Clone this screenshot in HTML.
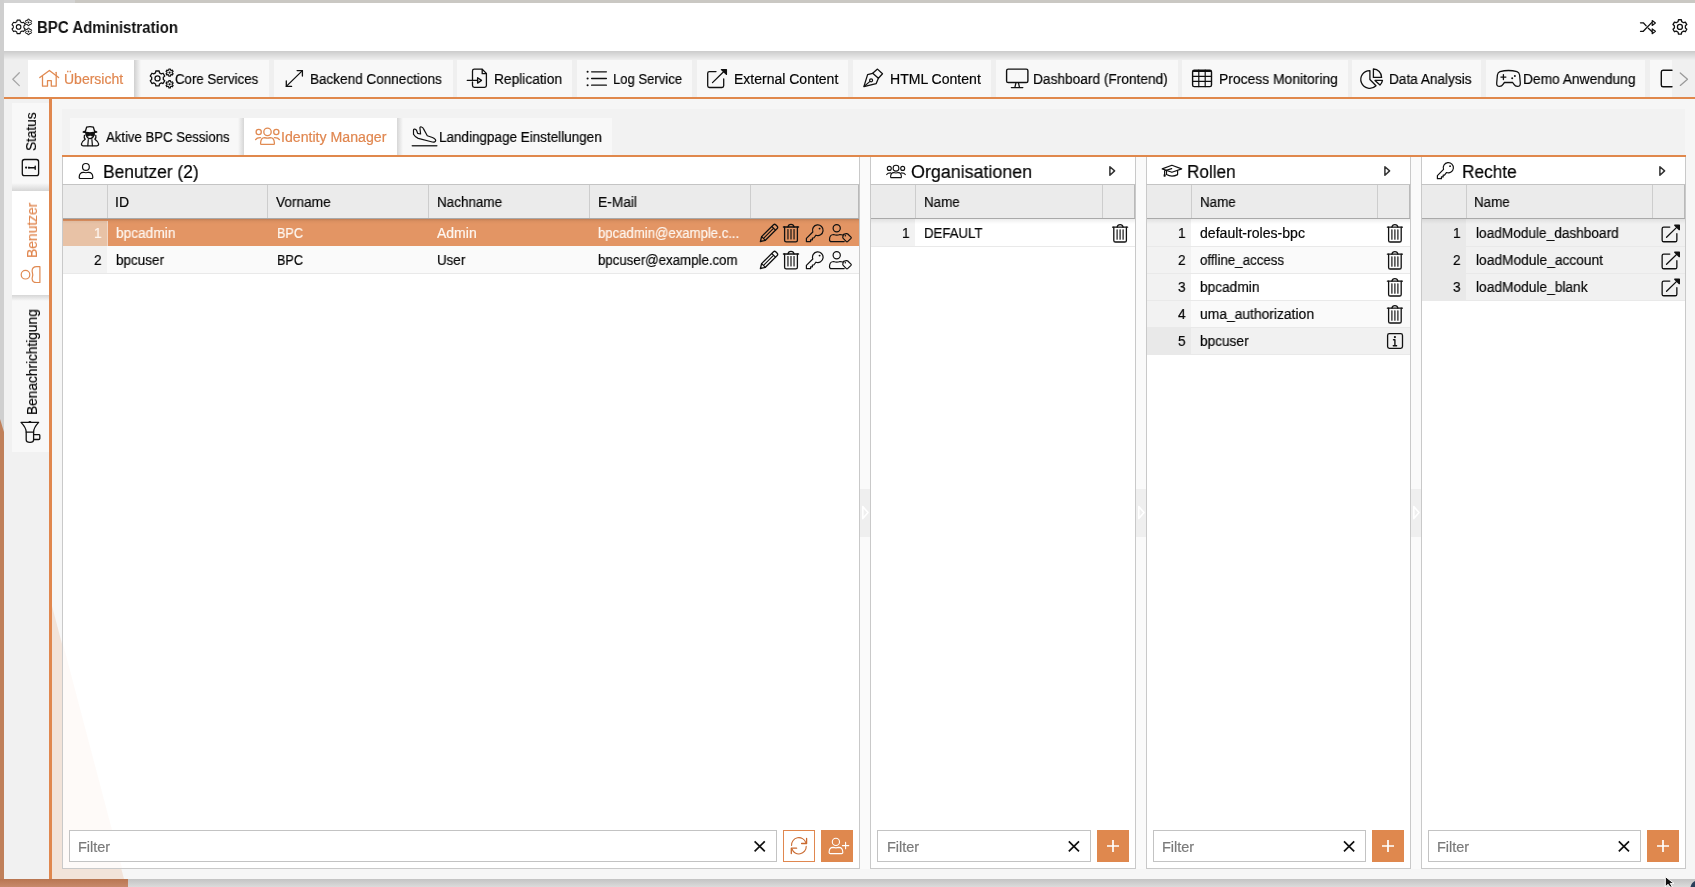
<!DOCTYPE html>
<html><head><meta charset="utf-8"><title>BPC Administration</title>
<style>
html,body{margin:0;padding:0;}
body{width:1695px;height:887px;position:relative;overflow:hidden;background:#d1d1d1;font-family:'Liberation Sans', sans-serif;}
.b{position:absolute;}
.t{position:absolute;white-space:nowrap;transform-origin:0 0;will-change:transform;-webkit-text-stroke:0.2px currentColor;}
.v{position:absolute;white-space:nowrap;transform-origin:0 0;}
svg.ic{position:absolute;left:0;top:0;}
</style></head><body>
<div class="b" style="left:75px;top:0px;width:1620px;height:3px;background:#cac8c3;"></div>
<div class="b" style="left:0px;top:0px;width:75px;height:3px;background:#d3d3d3;"></div>
<div class="b" style="left:0px;top:0px;width:4px;height:887px;background:#cfcfcf;"></div>
<div class="b" style="left:0px;top:419px;width:4px;height:468px;background:#c0805a;clip-path:polygon(0 0,100% 13px,100% 100%,0 100%)"></div>
<div class="b" style="left:0px;top:879px;width:1695px;height:8px;background:linear-gradient(#c3c3c3,#dbdbdb);"></div>
<div class="b" style="left:0px;top:879px;width:128px;height:8px;background:linear-gradient(#b87651,#c7896a);"></div>
<div class="b" style="left:4px;top:3px;width:1691px;height:48px;background:#fff;"></div>
<div class="b" style="left:4px;top:51px;width:1691px;height:46px;background:#efefef;"></div>
<div class="b" style="left:4px;top:51px;width:1691px;height:9px;background:linear-gradient(#cbcbcb,#efefef);"></div>
<div class="b" style="left:28px;top:60px;width:106px;height:37px;background:#fff;"></div>
<div class="b" style="left:134px;top:60px;width:135px;height:37px;background:#f8f8f8;"></div>
<div class="b" style="left:274px;top:60px;width:179px;height:37px;background:#f8f8f8;"></div>
<div class="b" style="left:457px;top:60px;width:115px;height:37px;background:#f8f8f8;"></div>
<div class="b" style="left:577px;top:60px;width:115px;height:37px;background:#f8f8f8;"></div>
<div class="b" style="left:697px;top:60px;width:151px;height:37px;background:#f8f8f8;"></div>
<div class="b" style="left:853px;top:60px;width:138px;height:37px;background:#f8f8f8;"></div>
<div class="b" style="left:996px;top:60px;width:182px;height:37px;background:#f8f8f8;"></div>
<div class="b" style="left:1182px;top:60px;width:166px;height:37px;background:#f8f8f8;"></div>
<div class="b" style="left:1352px;top:60px;width:129px;height:37px;background:#f8f8f8;"></div>
<div class="b" style="left:1486px;top:60px;width:159px;height:37px;background:#f8f8f8;"></div>
<div class="b" style="left:1650px;top:60px;width:22px;height:37px;background:#f8f8f8;"></div>
<div class="b" style="left:134px;top:60px;width:7px;height:37px;background:linear-gradient(90deg,#d0d0d0,#f8f8f8);"></div>
<div class="b" style="left:1672px;top:60px;width:23px;height:37px;background:#f0f0f0;"></div>
<div class="b" style="left:4px;top:97px;width:1691px;height:2px;background:#e0884c;"></div>
<div class="b" style="left:4px;top:99px;width:45px;height:780px;background:#f1f1f1;"></div>
<div class="b" style="left:12px;top:103px;width:37px;height:88px;background:#f8f8f8;"></div>
<div class="b" style="left:12px;top:183px;width:37px;height:8px;background:linear-gradient(#f8f8f8,#d6d6d6);"></div>
<div class="b" style="left:12px;top:191px;width:37px;height:104px;background:#fff;"></div>
<div class="b" style="left:12px;top:295px;width:37px;height:157px;background:#f8f8f8;"></div>
<div class="b" style="left:12px;top:295px;width:37px;height:6px;background:linear-gradient(#d6d6d6,#f8f8f8);"></div>
<div class="b" style="left:49px;top:99px;width:3px;height:780px;background:#e0874e;"></div>
<div class="b" style="left:52px;top:99px;width:1643px;height:780px;background:#f6f6f6;"></div>
<div class="b" style="left:62px;top:109px;width:1623px;height:760px;background:#f2f2f2;"></div>
<div class="b" style="left:52px;top:606px;width:72px;height:273px;background:#f2e3d9;clip-path:polygon(0 0,0 100%,100% 100%)"></div>
<div class="b" style="left:70px;top:118px;width:174px;height:37px;background:#f8f8f8;"></div>
<div class="b" style="left:238px;top:118px;width:6px;height:37px;background:linear-gradient(90deg,#f8f8f8,#d6d6d6);"></div>
<div class="b" style="left:244px;top:118px;width:153px;height:37px;background:#fff;"></div>
<div class="b" style="left:397px;top:118px;width:215px;height:37px;background:#f8f8f8;"></div>
<div class="b" style="left:397px;top:118px;width:6px;height:37px;background:linear-gradient(90deg,#d6d6d6,#f8f8f8);"></div>
<div class="b" style="left:62px;top:155px;width:1624px;height:2px;background:#e0884c;"></div>
<div class="b" style="left:62px;top:157px;width:1624px;height:712px;background:#fafafa;"></div>
<div class="b" style="left:62px;top:157px;width:798px;height:712px;background:#fff;border:1px solid #c9c9c9;border-top:none;box-sizing:border-box"></div>
<div class="b" style="left:62px;top:184px;width:798px;height:1px;background:#c4c4c4;"></div>
<div class="b" style="left:63px;top:185px;width:796px;height:33px;background:#ebebeb;"></div>
<div class="b" style="left:63px;top:218px;width:796px;height:1px;background:#a9a9a9;"></div>
<div class="b" style="left:107px;top:185px;width:1px;height:33px;background:#cdcdcd;"></div>
<div class="b" style="left:267px;top:185px;width:1px;height:33px;background:#cdcdcd;"></div>
<div class="b" style="left:428px;top:185px;width:1px;height:33px;background:#cdcdcd;"></div>
<div class="b" style="left:589px;top:185px;width:1px;height:33px;background:#cdcdcd;"></div>
<div class="b" style="left:750px;top:185px;width:1px;height:33px;background:#cdcdcd;"></div>
<div class="b" style="left:858px;top:185px;width:1px;height:33px;background:#b9b9b9;"></div>
<div class="b" style="left:63px;top:644px;width:59px;height:224px;background:rgba(224,136,78,0.04);clip-path:polygon(0 0,0 100%,100% 100%)"></div>
<div class="b" style="left:870px;top:157px;width:266px;height:712px;background:#fff;border:1px solid #c9c9c9;border-top:none;box-sizing:border-box"></div>
<div class="b" style="left:870px;top:184px;width:266px;height:1px;background:#c4c4c4;"></div>
<div class="b" style="left:871px;top:185px;width:264px;height:33px;background:#ebebeb;"></div>
<div class="b" style="left:871px;top:218px;width:264px;height:1px;background:#a9a9a9;"></div>
<div class="b" style="left:915px;top:185px;width:1px;height:33px;background:#cdcdcd;"></div>
<div class="b" style="left:1102px;top:185px;width:1px;height:33px;background:#cdcdcd;"></div>
<div class="b" style="left:1134px;top:185px;width:1px;height:33px;background:#b9b9b9;"></div>
<div class="b" style="left:1146px;top:157px;width:265px;height:712px;background:#fff;border:1px solid #c9c9c9;border-top:none;box-sizing:border-box"></div>
<div class="b" style="left:1146px;top:184px;width:265px;height:1px;background:#c4c4c4;"></div>
<div class="b" style="left:1147px;top:185px;width:263px;height:33px;background:#ebebeb;"></div>
<div class="b" style="left:1147px;top:218px;width:263px;height:1px;background:#a9a9a9;"></div>
<div class="b" style="left:1191px;top:185px;width:1px;height:33px;background:#cdcdcd;"></div>
<div class="b" style="left:1377px;top:185px;width:1px;height:33px;background:#cdcdcd;"></div>
<div class="b" style="left:1409px;top:185px;width:1px;height:33px;background:#b9b9b9;"></div>
<div class="b" style="left:1421px;top:157px;width:265px;height:712px;background:#fff;border:1px solid #c9c9c9;border-top:none;box-sizing:border-box"></div>
<div class="b" style="left:1421px;top:184px;width:265px;height:1px;background:#c4c4c4;"></div>
<div class="b" style="left:1422px;top:185px;width:263px;height:33px;background:#ebebeb;"></div>
<div class="b" style="left:1422px;top:218px;width:263px;height:1px;background:#a9a9a9;"></div>
<div class="b" style="left:1466px;top:185px;width:1px;height:33px;background:#cdcdcd;"></div>
<div class="b" style="left:1652px;top:185px;width:1px;height:33px;background:#cdcdcd;"></div>
<div class="b" style="left:1684px;top:185px;width:1px;height:33px;background:#b9b9b9;"></div>
<div class="b" style="left:63px;top:219px;width:796px;height:27px;background:#e39564;"></div>
<div class="b" style="left:63px;top:219px;width:44px;height:27px;background:#e8c2a6;"></div>
<div class="b" style="left:107px;top:219px;width:1px;height:27px;background:#f0d8c8;"></div>
<div class="b" style="left:63px;top:219px;width:796px;height:2px;background:linear-gradient(#cf875a,#e39564);"></div>
<div class="b" style="left:63px;top:246px;width:796px;height:27px;background:#fafafa;"></div>
<div class="b" style="left:63px;top:246px;width:44px;height:27px;background:#f2f2f2;"></div>
<div class="b" style="left:63px;top:273px;width:796px;height:1px;background:#e9e9e9;"></div>
<div class="b" style="left:63px;top:219px;width:796px;height:5px;background:linear-gradient(rgba(0,0,0,.07),rgba(0,0,0,0));"></div>
<div class="b" style="left:871px;top:219px;width:264px;height:27px;background:#ffffff;"></div>
<div class="b" style="left:871px;top:219px;width:44px;height:27px;background:#f2f2f2;"></div>
<div class="b" style="left:871px;top:246px;width:264px;height:1px;background:#e9e9e9;"></div>
<div class="b" style="left:871px;top:219px;width:264px;height:5px;background:linear-gradient(rgba(0,0,0,.07),rgba(0,0,0,0));"></div>
<div class="b" style="left:1147px;top:219px;width:263px;height:27px;background:#ffffff;"></div>
<div class="b" style="left:1147px;top:219px;width:44px;height:27px;background:#f2f2f2;"></div>
<div class="b" style="left:1147px;top:246px;width:263px;height:27px;background:#fafafa;"></div>
<div class="b" style="left:1147px;top:246px;width:44px;height:27px;background:#f2f2f2;"></div>
<div class="b" style="left:1147px;top:273px;width:263px;height:27px;background:#ffffff;"></div>
<div class="b" style="left:1147px;top:273px;width:44px;height:27px;background:#f2f2f2;"></div>
<div class="b" style="left:1147px;top:300px;width:263px;height:27px;background:#fafafa;"></div>
<div class="b" style="left:1147px;top:300px;width:44px;height:27px;background:#f2f2f2;"></div>
<div class="b" style="left:1147px;top:327px;width:263px;height:27px;background:#f1f1f1;"></div>
<div class="b" style="left:1147px;top:327px;width:44px;height:27px;background:#e9e9e9;"></div>
<div class="b" style="left:1147px;top:246px;width:263px;height:1px;background:#e9e9e9;"></div>
<div class="b" style="left:1147px;top:273px;width:263px;height:1px;background:#e9e9e9;"></div>
<div class="b" style="left:1147px;top:300px;width:263px;height:1px;background:#e9e9e9;"></div>
<div class="b" style="left:1147px;top:327px;width:263px;height:1px;background:#e9e9e9;"></div>
<div class="b" style="left:1147px;top:354px;width:263px;height:1px;background:#e9e9e9;"></div>
<div class="b" style="left:1147px;top:219px;width:263px;height:5px;background:linear-gradient(rgba(0,0,0,.07),rgba(0,0,0,0));"></div>
<div class="b" style="left:1422px;top:219px;width:263px;height:27px;background:#f1f1f1;"></div>
<div class="b" style="left:1422px;top:219px;width:44px;height:27px;background:#e9e9e9;"></div>
<div class="b" style="left:1422px;top:246px;width:263px;height:27px;background:#f1f1f1;"></div>
<div class="b" style="left:1422px;top:246px;width:44px;height:27px;background:#e9e9e9;"></div>
<div class="b" style="left:1422px;top:273px;width:263px;height:27px;background:#f1f1f1;"></div>
<div class="b" style="left:1422px;top:273px;width:44px;height:27px;background:#e9e9e9;"></div>
<div class="b" style="left:1422px;top:246px;width:263px;height:1px;background:#e9e9e9;"></div>
<div class="b" style="left:1422px;top:273px;width:263px;height:1px;background:#e9e9e9;"></div>
<div class="b" style="left:1422px;top:300px;width:263px;height:1px;background:#e9e9e9;"></div>
<div class="b" style="left:1422px;top:219px;width:263px;height:5px;background:linear-gradient(rgba(0,0,0,.07),rgba(0,0,0,0));"></div>
<div class="b" style="left:860px;top:489px;width:10px;height:48px;background:#efefef;"></div>
<div class="b" style="left:1136px;top:489px;width:10px;height:48px;background:#efefef;"></div>
<div class="b" style="left:1411px;top:489px;width:10px;height:48px;background:#efefef;"></div>
<div class="b" style="left:69px;top:830px;width:708px;height:32px;background:#fff;border:1px solid #c3c3c3;box-sizing:border-box"></div>
<div class="b" style="left:877px;top:830px;width:214px;height:32px;background:#fff;border:1px solid #c3c3c3;box-sizing:border-box"></div>
<div class="b" style="left:1153px;top:830px;width:213px;height:32px;background:#fff;border:1px solid #c3c3c3;box-sizing:border-box"></div>
<div class="b" style="left:1428px;top:830px;width:213px;height:32px;background:#fff;border:1px solid #c3c3c3;box-sizing:border-box"></div>
<div class="b" style="left:783px;top:830px;width:32px;height:32px;background:#fff;border:1px solid #e0874f;box-sizing:border-box"></div>
<div class="b" style="left:821px;top:830px;width:32px;height:32px;background:#df884e;"></div>
<div class="b" style="left:1097px;top:830px;width:32px;height:32px;background:#df884e;"></div>
<div class="b" style="left:1372px;top:830px;width:32px;height:32px;background:#df884e;"></div>
<div class="b" style="left:1647px;top:830px;width:32px;height:32px;background:#df884e;"></div>
<div class="b" style="left:1192.6px;top:70.2px;width:18.9px;height:2.2px;background:#111;border-radius:1.6px 1.6px 0 0"></div>
<span class="t" style="left:37.00px;top:20.46px;font-size:16px;line-height:16px;font-weight:700;color:#111;transform:scaleX(0.9367);-webkit-text-stroke:0;">BPC Administration</span>
<span class="t" style="left:64.40px;top:72.15px;font-size:14px;line-height:14px;font-weight:400;color:#e08750;">Übersicht</span>
<span class="t" style="left:175.40px;top:72.15px;font-size:14px;line-height:14px;font-weight:400;color:#050505;transform:scaleX(0.9452);">Core Services</span>
<span class="t" style="left:310.40px;top:72.15px;font-size:14px;line-height:14px;font-weight:400;color:#050505;transform:scaleX(0.9669);">Backend Connections</span>
<span class="t" style="left:493.50px;top:72.15px;font-size:14px;line-height:14px;font-weight:400;color:#050505;transform:scaleX(0.9817);">Replication</span>
<span class="t" style="left:613.30px;top:72.15px;font-size:14px;line-height:14px;font-weight:400;color:#050505;transform:scaleX(0.9332);">Log Service</span>
<span class="t" style="left:733.50px;top:72.15px;font-size:14px;line-height:14px;font-weight:400;color:#050505;">External Content</span>
<span class="t" style="left:890.00px;top:72.15px;font-size:14px;line-height:14px;font-weight:400;color:#050505;transform:scaleX(1.0031);">HTML Content</span>
<span class="t" style="left:1032.60px;top:72.15px;font-size:14px;line-height:14px;font-weight:400;color:#050505;transform:scaleX(0.9786);">Dashboard (Frontend)</span>
<span class="t" style="left:1218.70px;top:72.15px;font-size:14px;line-height:14px;font-weight:400;color:#050505;transform:scaleX(0.9923);">Process Monitoring</span>
<span class="t" style="left:1388.60px;top:72.15px;font-size:14px;line-height:14px;font-weight:400;color:#050505;transform:scaleX(0.9726);">Data Analysis</span>
<span class="t" style="left:1522.50px;top:72.15px;font-size:14px;line-height:14px;font-weight:400;color:#050505;transform:scaleX(0.9832);">Demo Anwendung</span>
<span class="t" style="left:106.30px;top:130.15px;font-size:14px;line-height:14px;font-weight:400;color:#050505;transform:scaleX(0.9399);">Aktive BPC Sessions</span>
<span class="t" style="left:281.30px;top:130.15px;font-size:14px;line-height:14px;font-weight:400;color:#e08750;transform:scaleX(1.0106);">Identity Manager</span>
<span class="t" style="left:438.50px;top:130.15px;font-size:14px;line-height:14px;font-weight:400;color:#050505;transform:scaleX(0.9631);">Landingpage Einstellungen</span>
<span class="t" style="left:102.60px;top:162.76px;font-size:18px;line-height:18px;font-weight:400;color:#050505;transform:scaleX(0.9662);">Benutzer (2)</span>
<span class="t" style="left:910.80px;top:162.76px;font-size:18px;line-height:18px;font-weight:400;color:#050505;transform:scaleX(0.9927);">Organisationen</span>
<span class="t" style="left:1186.80px;top:162.76px;font-size:18px;line-height:18px;font-weight:400;color:#050505;transform:scaleX(0.9524);">Rollen</span>
<span class="t" style="left:1461.80px;top:162.76px;font-size:18px;line-height:18px;font-weight:400;color:#050505;transform:scaleX(0.9589);">Rechte</span>
<span class="t" style="left:115.40px;top:195.15px;font-size:14px;line-height:14px;font-weight:400;color:#080808;">ID</span>
<span class="t" style="left:275.80px;top:195.15px;font-size:14px;line-height:14px;font-weight:400;color:#080808;transform:scaleX(0.9760);">Vorname</span>
<span class="t" style="left:436.50px;top:195.15px;font-size:14px;line-height:14px;font-weight:400;color:#080808;transform:scaleX(0.9601);">Nachname</span>
<span class="t" style="left:597.70px;top:195.15px;font-size:14px;line-height:14px;font-weight:400;color:#080808;transform:scaleX(0.9831);">E-Mail</span>
<span class="t" style="left:923.70px;top:195.15px;font-size:14px;line-height:14px;font-weight:400;color:#080808;transform:scaleX(0.9556);">Name</span>
<span class="t" style="left:1200.00px;top:195.15px;font-size:14px;line-height:14px;font-weight:400;color:#080808;transform:scaleX(0.9556);">Name</span>
<span class="t" style="left:1474.30px;top:195.15px;font-size:14px;line-height:14px;font-weight:400;color:#080808;transform:scaleX(0.9556);">Name</span>
<span class="t" style="left:94.44px;top:226.15px;font-size:14px;line-height:14px;font-weight:400;color:#fdf6f0;transform:scaleX(0.9700);">1</span>
<span class="t" style="left:116.20px;top:226.15px;font-size:14px;line-height:14px;font-weight:400;color:#fdf6f0;transform:scaleX(0.9785);">bpcadmin</span>
<span class="t" style="left:276.60px;top:226.15px;font-size:14px;line-height:14px;font-weight:400;color:#fdf6f0;transform:scaleX(0.9029);">BPC</span>
<span class="t" style="left:437.40px;top:226.15px;font-size:14px;line-height:14px;font-weight:400;color:#fdf6f0;">Admin</span>
<span class="t" style="left:598.40px;top:226.15px;font-size:14px;line-height:14px;font-weight:400;color:#fdf6f0;transform:scaleX(0.9389);">bpcadmin@example.c...</span>
<span class="t" style="left:94.44px;top:253.15px;font-size:14px;line-height:14px;font-weight:400;color:#080808;transform:scaleX(0.9700);">2</span>
<span class="t" style="left:116.20px;top:253.15px;font-size:14px;line-height:14px;font-weight:400;color:#080808;transform:scaleX(0.9636);">bpcuser</span>
<span class="t" style="left:276.60px;top:253.15px;font-size:14px;line-height:14px;font-weight:400;color:#080808;transform:scaleX(0.9029);">BPC</span>
<span class="t" style="left:437.40px;top:253.15px;font-size:14px;line-height:14px;font-weight:400;color:#080808;transform:scaleX(0.9539);">User</span>
<span class="t" style="left:598.40px;top:253.15px;font-size:14px;line-height:14px;font-weight:400;color:#080808;transform:scaleX(0.9478);">bpcuser@example.com</span>
<span class="t" style="left:902.44px;top:226.15px;font-size:14px;line-height:14px;font-weight:400;color:#080808;transform:scaleX(0.9700);">1</span>
<span class="t" style="left:924.40px;top:226.15px;font-size:14px;line-height:14px;font-weight:400;color:#080808;transform:scaleX(0.9422);">DEFAULT</span>
<span class="t" style="left:1178.24px;top:226.15px;font-size:14px;line-height:14px;font-weight:400;color:#080808;transform:scaleX(0.9700);">1</span>
<span class="t" style="left:1200.20px;top:226.15px;font-size:14px;line-height:14px;font-weight:400;color:#080808;transform:scaleX(1.0069);">default-roles-bpc</span>
<span class="t" style="left:1178.24px;top:253.15px;font-size:14px;line-height:14px;font-weight:400;color:#080808;transform:scaleX(0.9700);">2</span>
<span class="t" style="left:1200.20px;top:253.15px;font-size:14px;line-height:14px;font-weight:400;color:#080808;transform:scaleX(0.9495);">offline_access</span>
<span class="t" style="left:1178.24px;top:280.15px;font-size:14px;line-height:14px;font-weight:400;color:#080808;transform:scaleX(0.9700);">3</span>
<span class="t" style="left:1200.20px;top:280.15px;font-size:14px;line-height:14px;font-weight:400;color:#080808;transform:scaleX(0.9785);">bpcadmin</span>
<span class="t" style="left:1178.24px;top:307.15px;font-size:14px;line-height:14px;font-weight:400;color:#080808;transform:scaleX(0.9700);">4</span>
<span class="t" style="left:1200.20px;top:307.15px;font-size:14px;line-height:14px;font-weight:400;color:#080808;transform:scaleX(0.9897);">uma_authorization</span>
<span class="t" style="left:1178.24px;top:334.15px;font-size:14px;line-height:14px;font-weight:400;color:#080808;transform:scaleX(0.9700);">5</span>
<span class="t" style="left:1200.20px;top:334.15px;font-size:14px;line-height:14px;font-weight:400;color:#080808;transform:scaleX(0.9757);">bpcuser</span>
<span class="t" style="left:1453.04px;top:226.15px;font-size:14px;line-height:14px;font-weight:400;color:#080808;transform:scaleX(0.9700);">1</span>
<span class="t" style="left:1475.50px;top:226.15px;font-size:14px;line-height:14px;font-weight:400;color:#080808;transform:scaleX(0.9751);">loadModule_dashboard</span>
<span class="t" style="left:1453.04px;top:253.15px;font-size:14px;line-height:14px;font-weight:400;color:#080808;transform:scaleX(0.9700);">2</span>
<span class="t" style="left:1475.50px;top:253.15px;font-size:14px;line-height:14px;font-weight:400;color:#080808;transform:scaleX(0.9828);">loadModule_account</span>
<span class="t" style="left:1453.04px;top:280.15px;font-size:14px;line-height:14px;font-weight:400;color:#080808;transform:scaleX(0.9700);">3</span>
<span class="t" style="left:1475.50px;top:280.15px;font-size:14px;line-height:14px;font-weight:400;color:#080808;transform:scaleX(0.9820);">loadModule_blank</span>
<span class="t" style="left:78.30px;top:840.15px;font-size:14px;line-height:14px;font-weight:400;color:#7a7a7a;transform:scaleX(1.0345);">Filter</span>
<span class="t" style="left:886.70px;top:840.15px;font-size:14px;line-height:14px;font-weight:400;color:#7a7a7a;transform:scaleX(1.0345);">Filter</span>
<span class="t" style="left:1162.30px;top:840.15px;font-size:14px;line-height:14px;font-weight:400;color:#7a7a7a;transform:scaleX(1.0345);">Filter</span>
<span class="t" style="left:1437.40px;top:840.15px;font-size:14px;line-height:14px;font-weight:400;color:#7a7a7a;transform:scaleX(1.0345);">Filter</span>
<span class="t" style="left:24.15px;top:151.20px;font-size:14px;line-height:14px;font-weight:400;color:#050505;transform:rotate(-90deg) scaleX(0.9697);">Status</span>
<span class="t" style="left:24.65px;top:257.70px;font-size:14px;line-height:14px;font-weight:400;color:#e08750;transform:rotate(-90deg) scaleX(0.9885);">Benutzer</span>
<span class="t" style="left:24.55px;top:414.70px;font-size:14px;line-height:14px;font-weight:400;color:#050505;transform:rotate(-90deg) scaleX(0.9770);">Benachrichtigung</span>
<svg class="ic" width="1695" height="887" viewBox="0 0 1695 887">
<path d="M16.78 21.84 L17.09 20.17 L20.11 20.17 L20.42 21.84 L22.07 22.79 L23.68 22.23 L25.18 24.84 L23.90 25.95 L23.90 27.85 L25.18 28.96 L23.68 31.57 L22.07 31.01 L20.42 31.96 L20.11 33.63 L17.09 33.63 L16.78 31.96 L15.13 31.01 L13.52 31.57 L12.02 28.96 L13.30 27.85 L13.30 25.95 L12.02 24.84 L13.52 22.23 L15.13 22.79 Z" fill="none" stroke="#111" stroke-width="1.1" stroke-linecap="round" stroke-linejoin="round" />
<circle cx="18.6" cy="26.9" r="2.277" fill="none" stroke="#111" stroke-width="1.1"/>
<path d="M27.72 20.16 L27.81 19.17 L29.19 19.17 L29.28 20.16 L30.05 20.60 L30.95 20.19 L31.64 21.38 L30.83 21.95 L30.83 22.85 L31.64 23.42 L30.95 24.61 L30.05 24.20 L29.28 24.64 L29.19 25.63 L27.81 25.63 L27.72 24.64 L26.95 24.20 L26.05 24.61 L25.36 23.42 L26.17 22.85 L26.17 21.95 L25.36 21.38 L26.05 20.19 L26.95 20.60 Z" fill="none" stroke="#111" stroke-width="0.9900000000000001" stroke-linecap="round" stroke-linejoin="round" />
<circle cx="28.5" cy="22.4" r="0.9899999999999999" fill="#111"/>
<path d="M27.72 29.16 L27.81 28.17 L29.19 28.17 L29.28 29.16 L30.05 29.60 L30.95 29.19 L31.64 30.38 L30.83 30.95 L30.83 31.85 L31.64 32.42 L30.95 33.61 L30.05 33.20 L29.28 33.64 L29.19 34.63 L27.81 34.63 L27.72 33.64 L26.95 33.20 L26.05 33.61 L25.36 32.42 L26.17 31.85 L26.17 30.95 L25.36 30.38 L26.05 29.19 L26.95 29.60 Z" fill="none" stroke="#111" stroke-width="0.9900000000000001" stroke-linecap="round" stroke-linejoin="round" />
<circle cx="28.5" cy="31.4" r="0.9899999999999999" fill="#111"/>
<path d="M155.49 72.82 L155.84 70.98 L159.16 70.98 L159.51 72.82 L161.33 73.87 L163.09 73.26 L164.75 76.13 L163.33 77.35 L163.33 79.45 L164.75 80.67 L163.09 83.54 L161.33 82.93 L159.51 83.98 L159.16 85.82 L155.84 85.82 L155.49 83.98 L153.67 82.93 L151.91 83.54 L150.25 80.67 L151.67 79.45 L151.67 77.35 L150.25 76.13 L151.91 73.26 L153.67 73.87 Z" fill="none" stroke="#111" stroke-width="1.3" stroke-linecap="round" stroke-linejoin="round" />
<circle cx="157.5" cy="78.4" r="2.508" fill="none" stroke="#111" stroke-width="1.3"/>
<path d="M168.72 70.08 L168.83 68.98 L170.37 68.98 L170.48 70.08 L171.34 70.58 L172.35 70.12 L173.12 71.46 L172.22 72.10 L172.22 73.10 L173.12 73.74 L172.35 75.08 L171.34 74.62 L170.48 75.12 L170.37 76.22 L168.83 76.22 L168.72 75.12 L167.86 74.62 L166.85 75.08 L166.08 73.74 L166.98 73.10 L166.98 72.10 L166.08 71.46 L166.85 70.12 L167.86 70.58 Z" fill="none" stroke="#111" stroke-width="1.1700000000000002" stroke-linecap="round" stroke-linejoin="round" />
<circle cx="169.6" cy="72.6" r="1.11" fill="#111"/>
<path d="M168.72 81.78 L168.83 80.68 L170.37 80.68 L170.48 81.78 L171.34 82.28 L172.35 81.82 L173.12 83.16 L172.22 83.80 L172.22 84.80 L173.12 85.44 L172.35 86.78 L171.34 86.32 L170.48 86.82 L170.37 87.92 L168.83 87.92 L168.72 86.82 L167.86 86.32 L166.85 86.78 L166.08 85.44 L166.98 84.80 L166.98 83.80 L166.08 83.16 L166.85 81.82 L167.86 82.28 Z" fill="none" stroke="#111" stroke-width="1.1700000000000002" stroke-linecap="round" stroke-linejoin="round" />
<circle cx="169.6" cy="84.3" r="1.11" fill="#111"/>
<path d="M1640.5 22.8 H1643.3 L1646.2 25.9" fill="none" stroke="#111" stroke-width="1.3" stroke-linecap="round" stroke-linejoin="round" />
<path d="M1640.5 31.3 H1643.3 L1651.6 22.6" fill="none" stroke="#111" stroke-width="1.3" stroke-linecap="round" stroke-linejoin="round" />
<path d="M1648.3 28.2 L1651.6 31.3" fill="none" stroke="#111" stroke-width="1.3" stroke-linecap="round" stroke-linejoin="round" />
<path d="M1652.2 20.6 L1655.4 23 L1652.2 25.4 Z" fill="none" stroke="#111" stroke-width="1.2" stroke-linecap="round" stroke-linejoin="round" />
<path d="M1652.2 28.9 L1655.4 31.3 L1652.2 33.7 Z" fill="none" stroke="#111" stroke-width="1.2" stroke-linecap="round" stroke-linejoin="round" />
<path d="M1678.11 21.59 L1678.46 19.74 L1681.34 19.74 L1681.69 21.59 L1683.60 22.70 L1685.38 22.07 L1686.82 24.57 L1685.39 25.79 L1685.39 28.01 L1686.82 29.23 L1685.38 31.73 L1683.60 31.10 L1681.69 32.21 L1681.34 34.06 L1678.46 34.06 L1678.11 32.21 L1676.20 31.10 L1674.42 31.73 L1672.98 29.23 L1674.41 28.01 L1674.41 25.79 L1672.98 24.57 L1674.42 22.07 L1676.20 22.70 Z" fill="none" stroke="#111" stroke-width="1.3" stroke-linecap="round" stroke-linejoin="round" />
<circle cx="1679.9" cy="26.9" r="2.5" fill="none" stroke="#111" stroke-width="1.3"/>
<path d="M19.3 72.8 L12.8 79.2 L19.3 85.6" fill="none" stroke="#a6a6a6" stroke-width="1.3" stroke-linecap="round" stroke-linejoin="round" />
<path d="M1680.3 73 L1687.5 79.2 L1680.3 85.4" fill="none" stroke="#9a9a9a" stroke-width="1.3" stroke-linecap="round" stroke-linejoin="round" />
<path d="M39.8 77.6 L49.4 70.4 L58.6 77.6" fill="none" stroke="#e08a52" stroke-width="1.3" stroke-linecap="round" stroke-linejoin="round" />
<path d="M42.5 76.3 V86.2 H47.5 V80.7 H51.3 V86.2 H56.2 V76.3" fill="none" stroke="#e08a52" stroke-width="1.3" stroke-linecap="round" stroke-linejoin="round" />
<path d="M56.2 72.3 V75.5" fill="none" stroke="#e08a52" stroke-width="1.3" stroke-linecap="round" stroke-linejoin="round" />
<path d="M286.3 86.4 L302.4 70.6" fill="none" stroke="#111" stroke-width="1.3" stroke-linecap="round" stroke-linejoin="round" />
<path d="M286.3 81 V86.4 H291.6" fill="none" stroke="#111" stroke-width="1.3" stroke-linecap="round" stroke-linejoin="round" />
<path d="M297.1 70.6 H302.4 V76" fill="none" stroke="#111" stroke-width="1.3" stroke-linecap="round" stroke-linejoin="round" />
<path d="M472.5 79.8 V71 Q472.5 69.2 474.3 69.2 H482.2 L486.4 73.4 V85.6 Q486.4 87.4 484.6 87.4 H474.3 Q472.5 87.4 472.5 85.6 V82" fill="none" stroke="#111" stroke-width="1.3" stroke-linecap="round" stroke-linejoin="round" />
<path d="M482.2 69.4 V73.7 H486.2" fill="none" stroke="#111" stroke-width="1.3" stroke-linecap="round" stroke-linejoin="round" />
<path d="M467.3 80.4 H477.6" fill="none" stroke="#111" stroke-width="1.3" stroke-linecap="round" stroke-linejoin="round" />
<path d="M477.6 77.7 L481.5 80.4 L477.6 83.1 Z" fill="none" stroke="#111" stroke-width="1.3" stroke-linecap="round" stroke-linejoin="round" />
<circle cx="587.6" cy="71.8" r="1.05" fill="#111"/>
<path d="M591.6 71.8 H606.4" fill="none" stroke="#111" stroke-width="1.3" stroke-linecap="round" stroke-linejoin="round" />
<circle cx="587.6" cy="78.5" r="1.05" fill="#111"/>
<path d="M591.6 78.5 H606.4" fill="none" stroke="#111" stroke-width="1.3" stroke-linecap="round" stroke-linejoin="round" />
<circle cx="587.6" cy="85.2" r="1.05" fill="#111"/>
<path d="M591.6 85.2 H606.4" fill="none" stroke="#111" stroke-width="1.3" stroke-linecap="round" stroke-linejoin="round" />
<path d="M716.00 71.60 H709.40 Q707.70 71.60 707.70 73.30 V85.80 Q707.70 87.50 709.40 87.50 H722.00 Q723.70 87.50 723.70 85.80 V78.80" fill="none" stroke="#111" stroke-width="1.3" stroke-linecap="round" stroke-linejoin="round" />
<path d="M712.50 82.60 L724.60 70.80" fill="none" stroke="#111" stroke-width="1.3" stroke-linecap="round" stroke-linejoin="round" />
<path d="M721.40 69.60 H726.40 V74.40 Z" fill="#111" stroke="#111" stroke-width="1.3" stroke-linecap="round" stroke-linejoin="round" />
<path d="M872.7 73.3 L877.5 69.1 L882.5 73.8 L878.4 78.3 Z" fill="none" stroke="#111" stroke-width="1.3" stroke-linecap="round" stroke-linejoin="round" />
<path d="M872.7 73.3 L867.6 74.6 L863.9 86.6 L876.2 83.6 L878.4 78.3" fill="none" stroke="#111" stroke-width="1.3" stroke-linecap="round" stroke-linejoin="round" />
<circle cx="871.1" cy="80.3" r="1.5" fill="none" stroke="#111" stroke-width="1.2"/>
<path d="M864.3 86.2 L870 81.4" fill="none" stroke="#111" stroke-width="1.2" stroke-linecap="round" stroke-linejoin="round" />
<rect x="1006.6" y="69.1" width="21.3" height="13.4" rx="1.6" fill="none" stroke="#111" stroke-width="1.4"/>
<path d="M1016 82.6 L1014.9 87.3 M1018.4 82.6 L1019.5 87.3" fill="none" stroke="#111" stroke-width="1.3" stroke-linecap="round" stroke-linejoin="round" />
<path d="M1011.4 87.6 H1022.8" fill="none" stroke="#111" stroke-width="1.4" stroke-linecap="round" stroke-linejoin="round" />
<rect x="1192.6" y="70.2" width="18.9" height="16.4" rx="1.6" fill="none" stroke="#111" stroke-width="1.4"/>
<path d="M1192.6 76.3 H1211.5 M1192.6 81.4 H1211.5 M1198.8 70.2 V86.6 M1205.2 70.2 V86.6" fill="none" stroke="#111" stroke-width="1.2" stroke-linecap="round" stroke-linejoin="round" />
<path d="M1369.9 70.6 V79.5 L1376 85.8 A8.9 8.9 0 1 1 1369.9 70.6 Z" fill="none" stroke="#111" stroke-width="1.3" stroke-linecap="round" stroke-linejoin="round" />
<path d="M1373.4 69 V77.4 H1381.6 A8.4 8.4 0 0 0 1373.4 69 Z" fill="none" stroke="#111" stroke-width="1.3" stroke-linecap="round" stroke-linejoin="round" />
<path d="M1375 80.4 H1382.5 A8.5 8.5 0 0 1 1380 85 Z" fill="none" stroke="#111" stroke-width="1.3" stroke-linecap="round" stroke-linejoin="round" />
<path d="M1500 71.6 Q1508.4 69.4 1517 71.6 Q1519.2 72.4 1519.6 75 L1520.3 83 Q1520.6 86.4 1517.4 86.4 Q1515.2 86.4 1514 84.4 L1512.7 82.5 H1504.4 L1503 84.4 Q1501.8 86.4 1499.6 86.4 Q1496.4 86.4 1496.7 83 L1497.4 75 Q1497.8 72.4 1500 71.6 Z" fill="none" stroke="#111" stroke-width="1.3" stroke-linecap="round" stroke-linejoin="round" />
<path d="M1500.9 77.1 H1505.9 M1503.4 74.6 V79.6" fill="none" stroke="#111" stroke-width="1.3" stroke-linecap="round" stroke-linejoin="round" />
<circle cx="1514.9" cy="75.9" r="1" fill="#111"/><circle cx="1512.2" cy="78.3" r="1" fill="#111"/>
<path d="M1672 70.2 H1663 Q1661.3 70.2 1661.3 72 V85 Q1661.3 86.8 1663 86.8 H1672" fill="none" stroke="#111" stroke-width="1.4" stroke-linecap="round" stroke-linejoin="round" />
<rect x="22.3" y="159.5" width="16.3" height="16.2" rx="2.2" fill="none" stroke="#111" stroke-width="1.3"/>
<circle cx="26.1" cy="167.6" r="1.1" fill="#111"/>
<path d="M28.6 167.8 H35.2 M35.2 166.3 V169.2" fill="none" stroke="#111" stroke-width="1.4" stroke-linecap="round" stroke-linejoin="round" />
<path d="M28.9 166.9 V168.3" fill="none" stroke="#111" stroke-width="0.9" stroke-linecap="round" stroke-linejoin="round" />
<circle cx="25.5" cy="274.7" r="4.3" fill="none" stroke="#e08a52" stroke-width="1.2"/>
<path d="M39.9 266.7 V282.5 H36.6 Q32.2 282.5 32.1 278.4 Q33.4 274.7 32.1 271 Q32.2 266.7 36.6 266.7 Z" fill="none" stroke="#e08a52" stroke-width="1.2" stroke-linecap="round" stroke-linejoin="round" />
<path d="M21 422.4 H38.6 Q33.8 427.5 33.6 432 V439.7 Q33.6 442.3 30 442.3 Q26.2 442.3 26.2 439.7 V432 Q26 427.5 21 422.4 Z" fill="none" stroke="#111" stroke-width="1.3" stroke-linecap="round" stroke-linejoin="round" />
<path d="M26.2 432.1 H33.6" fill="none" stroke="#111" stroke-width="1.3" stroke-linecap="round" stroke-linejoin="round" />
<path d="M33.6 434.7 H38.6 Q39.8 434.4 39.8 435.5 V438.6 Q39.8 439.5 38.6 439.5 H33.6" fill="none" stroke="#111" stroke-width="1.3" stroke-linecap="round" stroke-linejoin="round" />
<ellipse cx="29.9" cy="421.8" rx="1.4" ry="0.8" fill="#111"/>
<path d="M86.6 127.2 Q89.9 126 93.4 127.2 L94.6 131.2 Q96.5 131.4 96.8 132 Q90 133.6 83.1 132 Q83.5 131.4 85.4 131.2 Z" fill="none" stroke="#111" stroke-width="1.3" stroke-linecap="round" stroke-linejoin="round" />
<path d="M85.8 133.4 H94.4 Q94.4 136 93 136 Q91.5 136 90.1 134.8 Q88.7 136 87.2 136 Q85.8 136 85.8 133.4 Z" fill="#111" stroke="#111" stroke-width="1.1" stroke-linecap="round" stroke-linejoin="round" />
<path d="M86.4 135.2 Q87.2 138.6 90.1 138.6 Q93 138.6 93.8 135.2" fill="none" stroke="#111" stroke-width="1.3" stroke-linecap="round" stroke-linejoin="round" />
<path d="M84.4 135.4 Q83.7 137.5 85.2 139.2 Q81.6 141.6 81.4 144 Q81.4 145.8 83 145.8 H97 Q98.7 145.8 98.7 144 Q98.4 141.6 94.9 139.2 Q96.4 137.5 95.8 135.4" fill="none" stroke="#111" stroke-width="1.3" stroke-linecap="round" stroke-linejoin="round" />
<path d="M88.3 139.6 L87.8 145.6 M91.9 139.6 L92.4 145.6" fill="none" stroke="#111" stroke-width="1.2" stroke-linecap="round" stroke-linejoin="round" />
<circle cx="267.5" cy="131.9" r="3.7" fill="none" stroke="#e08a52" stroke-width="1.3"/>
<circle cx="258.7" cy="132" r="2.6" fill="none" stroke="#e08a52" stroke-width="1.3"/>
<circle cx="276.3" cy="132" r="2.6" fill="none" stroke="#e08a52" stroke-width="1.3"/>
<path d="M261.6 144.4 H273.4 Q274.6 144.4 274.4 143 Q274.2 137.6 270.4 137.6 Q267.5 138.6 264.6 137.6 Q260.8 137.6 260.6 143 Q260.4 144.4 261.6 144.4 Z" fill="none" stroke="#e08a52" stroke-width="1.3" stroke-linecap="round" stroke-linejoin="round" />
<path d="M255.6 139.6 Q256.8 137.5 260.6 137.6 M274.4 137.6 Q278.2 137.5 279.4 139.6" fill="none" stroke="#e08a52" stroke-width="1.3" stroke-linecap="round" stroke-linejoin="round" />
<path d="M413.5 134.2 V130.3 Q413.6 128.8 415 129.2 Q416.3 129.5 416.8 131 L417.6 133.3 L420.6 134 L419.9 127.8 Q420 126.6 421.5 127 Q422.8 127.4 423.4 128.6 L427.3 135.8 L432.4 137.5 Q435.7 138.8 435.7 140.6 Q435.4 142.5 432.3 142 L418.2 138.4 Q415.2 137.2 413.5 134.2 Z" fill="none" stroke="#111" stroke-width="1.2" stroke-linecap="round" stroke-linejoin="round" />
<path d="M412.3 145.8 H436.8" fill="none" stroke="#333" stroke-width="1.5" stroke-linecap="round" stroke-linejoin="round" />
<circle cx="85.9" cy="166.9" r="3.4" fill="none" stroke="#111" stroke-width="1.2"/>
<path d="M80.4 178.5 H91.6 Q92.9 178.5 92.8 177 Q92.6 172.4 88.6 172.3 Q85.9 173.2 83.3 172.3 Q79.4 172.4 79.2 177 Q79.1 178.5 80.4 178.5 Z" fill="none" stroke="#111" stroke-width="1.2" stroke-linecap="round" stroke-linejoin="round" />
<circle cx="896" cy="168.2" r="2.9" fill="none" stroke="#111" stroke-width="1.1"/>
<circle cx="889.3" cy="168.4" r="2.0" fill="none" stroke="#111" stroke-width="1.1"/>
<circle cx="902.7" cy="168.4" r="2.0" fill="none" stroke="#111" stroke-width="1.1"/>
<path d="M891.4 177.6 H900.6 Q901.5 177.6 901.4 176.5 Q901.2 172.6 898.3 172.6 Q896 173.4 893.7 172.6 Q890.8 172.6 890.6 176.5 Q890.5 177.6 891.4 177.6 Z" fill="none" stroke="#111" stroke-width="1.1" stroke-linecap="round" stroke-linejoin="round" />
<path d="M886.7 174.6 Q887.6 172.9 890.6 172.9 M901.4 172.9 Q904.4 172.9 905.3 174.6" fill="none" stroke="#111" stroke-width="1.1" stroke-linecap="round" stroke-linejoin="round" />
<path d="M1162.2 168.9 L1171.9 165.3 L1181.7 168.9 L1171.9 172.3 Z" fill="none" stroke="#111" stroke-width="1.2" stroke-linecap="round" stroke-linejoin="round" />
<path d="M1166.5 170.8 V174.6 Q1171.9 177.7 1177.6 174.6 V170.8" fill="none" stroke="#111" stroke-width="1.2" stroke-linecap="round" stroke-linejoin="round" />
<path d="M1171.7 168.6 L1164.6 170.8 V175.8" fill="none" stroke="#111" stroke-width="1.2" stroke-linecap="round" stroke-linejoin="round" />
<rect x="1163.6" y="174.4" width="2" height="2.2" fill="#111"/>
<path d="M1443.54 169.42 L1437.40 175.56 V178.63 H1441.43 V176.90 H1443.16 V175.18 H1444.50 L1446.62 172.49 A5.09 5.09 0 1 0 1443.54 169.42 Z" fill="none" stroke="#111" stroke-width="1.2" stroke-linecap="round" stroke-linejoin="round" />
<circle cx="1450.07" cy="166.15" r="0.91" fill="#111"/>
<path d="M1109.9 166.7 L1114.6000000000001 170.9 L1109.9 175.2 Z" fill="none" stroke="#333" stroke-width="1.5" stroke-linecap="round" stroke-linejoin="round" />
<path d="M1384.9 166.7 L1389.6000000000001 170.9 L1384.9 175.2 Z" fill="none" stroke="#333" stroke-width="1.5" stroke-linecap="round" stroke-linejoin="round" />
<path d="M1659.9 166.7 L1664.6000000000001 170.9 L1659.9 175.2 Z" fill="none" stroke="#333" stroke-width="1.5" stroke-linecap="round" stroke-linejoin="round" />
<path d="M760.4 241.5 L761.6 236.6 L773.5 224.8 Q774.6 223.8 775.7 224.8 L777.2 226.3 Q778.2 227.4 777.2 228.5 L765.4 240.3 Z" fill="none" stroke="#111" stroke-width="1.3" stroke-linecap="round" stroke-linejoin="round" />
<path d="M771.8 226.5 L775.5 230.2 M761.6 236.6 L765.4 240.3 M764 237.8 L773.2 228.6" fill="none" stroke="#111" stroke-width="1.1700000000000002" stroke-linecap="round" stroke-linejoin="round" />
<path d="M783.4 227 H798.6" fill="none" stroke="#111" stroke-width="1.3" stroke-linecap="round" stroke-linejoin="round" />
<path d="M787.96 227 Q788.42 224.4 791.00 224.4 Q793.58 224.4 794.04 227" fill="none" stroke="#111" stroke-width="1.3" stroke-linecap="round" stroke-linejoin="round" />
<path d="M784.60 227 V240.20 Q784.60 241.8 786.20 241.8 H795.80 Q797.40 241.8 797.40 240.20 V227" fill="none" stroke="#111" stroke-width="1.3" stroke-linecap="round" stroke-linejoin="round" />
<path d="M787.96 229.6 V239.00" fill="none" stroke="#111" stroke-width="1.1700000000000002" stroke-linecap="round" stroke-linejoin="round" />
<path d="M791.00 229.6 V239.00" fill="none" stroke="#111" stroke-width="1.1700000000000002" stroke-linecap="round" stroke-linejoin="round" />
<path d="M794.04 229.6 V239.00" fill="none" stroke="#111" stroke-width="1.1700000000000002" stroke-linecap="round" stroke-linejoin="round" />
<path d="M812.80 232.00 L806.40 238.40 V241.60 H810.60 V239.80 H812.40 V238.00 H813.80 L816.00 235.20 A5.30 5.30 0 1 0 812.80 232.00 Z" fill="none" stroke="#111" stroke-width="1.2" stroke-linecap="round" stroke-linejoin="round" />
<circle cx="819.60" cy="228.60" r="0.95" fill="#111"/>
<circle cx="836.7" cy="228.29999999999998" r="3.6" fill="none" stroke="#111" stroke-width="1.2"/>
<path d="M842.6 235.0 Q841.6 234.5 840 234.5 Q836.7 235.6 833.6 234.5 Q829.6 234.6 829.5 239.4 Q829.5 241.6 831.4 241.6 H844.2" fill="none" stroke="#111" stroke-width="1.2" stroke-linecap="round" stroke-linejoin="round" />
<path d="M843.5 234.4 L846.4 233.6 Q847.2 233.4 847.8 234.0 L851 237.2 Q851.6 237.79999999999998 851 238.4 L847.6 241.6 Q847 242.2 846.4 241.6 L843.2 238.4 Q842.6 237.79999999999998 842.8 237.0 Z" fill="none" stroke="#111" stroke-width="1.2" stroke-linecap="round" stroke-linejoin="round" />
<circle cx="845.3" cy="235.79999999999998" r="0.8" fill="#111"/>
<path d="M760.4 268.5 L761.6 263.6 L773.5 251.8 Q774.6 250.8 775.7 251.8 L777.2 253.3 Q778.2 254.4 777.2 255.5 L765.4 267.3 Z" fill="none" stroke="#111" stroke-width="1.3" stroke-linecap="round" stroke-linejoin="round" />
<path d="M771.8 253.5 L775.5 257.2 M761.6 263.6 L765.4 267.3 M764 264.8 L773.2 255.6" fill="none" stroke="#111" stroke-width="1.1700000000000002" stroke-linecap="round" stroke-linejoin="round" />
<path d="M783.4 254 H798.6" fill="none" stroke="#111" stroke-width="1.3" stroke-linecap="round" stroke-linejoin="round" />
<path d="M787.96 254 Q788.42 251.4 791.00 251.4 Q793.58 251.4 794.04 254" fill="none" stroke="#111" stroke-width="1.3" stroke-linecap="round" stroke-linejoin="round" />
<path d="M784.60 254 V267.20 Q784.60 268.8 786.20 268.8 H795.80 Q797.40 268.8 797.40 267.20 V254" fill="none" stroke="#111" stroke-width="1.3" stroke-linecap="round" stroke-linejoin="round" />
<path d="M787.96 256.6 V266.00" fill="none" stroke="#111" stroke-width="1.1700000000000002" stroke-linecap="round" stroke-linejoin="round" />
<path d="M791.00 256.6 V266.00" fill="none" stroke="#111" stroke-width="1.1700000000000002" stroke-linecap="round" stroke-linejoin="round" />
<path d="M794.04 256.6 V266.00" fill="none" stroke="#111" stroke-width="1.1700000000000002" stroke-linecap="round" stroke-linejoin="round" />
<path d="M812.80 259.00 L806.40 265.40 V268.60 H810.60 V266.80 H812.40 V265.00 H813.80 L816.00 262.20 A5.30 5.30 0 1 0 812.80 259.00 Z" fill="none" stroke="#111" stroke-width="1.2" stroke-linecap="round" stroke-linejoin="round" />
<circle cx="819.60" cy="255.60" r="0.95" fill="#111"/>
<circle cx="836.7" cy="255.29999999999998" r="3.6" fill="none" stroke="#111" stroke-width="1.2"/>
<path d="M842.6 262.0 Q841.6 261.5 840 261.5 Q836.7 262.6 833.6 261.5 Q829.6 261.6 829.5 266.4 Q829.5 268.6 831.4 268.6 H844.2" fill="none" stroke="#111" stroke-width="1.2" stroke-linecap="round" stroke-linejoin="round" />
<path d="M843.5 261.4 L846.4 260.6 Q847.2 260.4 847.8 261.0 L851 264.2 Q851.6 264.8 851 265.4 L847.6 268.6 Q847 269.2 846.4 268.6 L843.2 265.4 Q842.6 264.8 842.8 264.0 Z" fill="none" stroke="#111" stroke-width="1.2" stroke-linecap="round" stroke-linejoin="round" />
<circle cx="845.3" cy="262.8" r="0.8" fill="#111"/>
<path d="M1112.6 227.2 H1127.6" fill="none" stroke="#111" stroke-width="1.3" stroke-linecap="round" stroke-linejoin="round" />
<path d="M1117.10 227.2 Q1117.55 224.6 1120.10 224.6 Q1122.65 224.6 1123.10 227.2" fill="none" stroke="#111" stroke-width="1.3" stroke-linecap="round" stroke-linejoin="round" />
<path d="M1113.80 227.2 V240.40 Q1113.80 242.0 1115.40 242.0 H1124.80 Q1126.40 242.0 1126.40 240.40 V227.2" fill="none" stroke="#111" stroke-width="1.3" stroke-linecap="round" stroke-linejoin="round" />
<path d="M1117.10 229.79999999999998 V239.20" fill="none" stroke="#111" stroke-width="1.1700000000000002" stroke-linecap="round" stroke-linejoin="round" />
<path d="M1120.10 229.79999999999998 V239.20" fill="none" stroke="#111" stroke-width="1.1700000000000002" stroke-linecap="round" stroke-linejoin="round" />
<path d="M1123.10 229.79999999999998 V239.20" fill="none" stroke="#111" stroke-width="1.1700000000000002" stroke-linecap="round" stroke-linejoin="round" />
<path d="M1387.4 227.2 H1402.4" fill="none" stroke="#111" stroke-width="1.3" stroke-linecap="round" stroke-linejoin="round" />
<path d="M1391.90 227.2 Q1392.35 224.6 1394.90 224.6 Q1397.45 224.6 1397.90 227.2" fill="none" stroke="#111" stroke-width="1.3" stroke-linecap="round" stroke-linejoin="round" />
<path d="M1388.60 227.2 V240.40 Q1388.60 242.0 1390.20 242.0 H1399.60 Q1401.20 242.0 1401.20 240.40 V227.2" fill="none" stroke="#111" stroke-width="1.3" stroke-linecap="round" stroke-linejoin="round" />
<path d="M1391.90 229.79999999999998 V239.20" fill="none" stroke="#111" stroke-width="1.1700000000000002" stroke-linecap="round" stroke-linejoin="round" />
<path d="M1394.90 229.79999999999998 V239.20" fill="none" stroke="#111" stroke-width="1.1700000000000002" stroke-linecap="round" stroke-linejoin="round" />
<path d="M1397.90 229.79999999999998 V239.20" fill="none" stroke="#111" stroke-width="1.1700000000000002" stroke-linecap="round" stroke-linejoin="round" />
<path d="M1387.4 254.2 H1402.4" fill="none" stroke="#111" stroke-width="1.3" stroke-linecap="round" stroke-linejoin="round" />
<path d="M1391.90 254.2 Q1392.35 251.6 1394.90 251.6 Q1397.45 251.6 1397.90 254.2" fill="none" stroke="#111" stroke-width="1.3" stroke-linecap="round" stroke-linejoin="round" />
<path d="M1388.60 254.2 V267.40 Q1388.60 269.0 1390.20 269.0 H1399.60 Q1401.20 269.0 1401.20 267.40 V254.2" fill="none" stroke="#111" stroke-width="1.3" stroke-linecap="round" stroke-linejoin="round" />
<path d="M1391.90 256.8 V266.20" fill="none" stroke="#111" stroke-width="1.1700000000000002" stroke-linecap="round" stroke-linejoin="round" />
<path d="M1394.90 256.8 V266.20" fill="none" stroke="#111" stroke-width="1.1700000000000002" stroke-linecap="round" stroke-linejoin="round" />
<path d="M1397.90 256.8 V266.20" fill="none" stroke="#111" stroke-width="1.1700000000000002" stroke-linecap="round" stroke-linejoin="round" />
<path d="M1387.4 281.2 H1402.4" fill="none" stroke="#111" stroke-width="1.3" stroke-linecap="round" stroke-linejoin="round" />
<path d="M1391.90 281.2 Q1392.35 278.59999999999997 1394.90 278.59999999999997 Q1397.45 278.59999999999997 1397.90 281.2" fill="none" stroke="#111" stroke-width="1.3" stroke-linecap="round" stroke-linejoin="round" />
<path d="M1388.60 281.2 V294.40 Q1388.60 296.0 1390.20 296.0 H1399.60 Q1401.20 296.0 1401.20 294.40 V281.2" fill="none" stroke="#111" stroke-width="1.3" stroke-linecap="round" stroke-linejoin="round" />
<path d="M1391.90 283.8 V293.20" fill="none" stroke="#111" stroke-width="1.1700000000000002" stroke-linecap="round" stroke-linejoin="round" />
<path d="M1394.90 283.8 V293.20" fill="none" stroke="#111" stroke-width="1.1700000000000002" stroke-linecap="round" stroke-linejoin="round" />
<path d="M1397.90 283.8 V293.20" fill="none" stroke="#111" stroke-width="1.1700000000000002" stroke-linecap="round" stroke-linejoin="round" />
<path d="M1387.4 308.2 H1402.4" fill="none" stroke="#111" stroke-width="1.3" stroke-linecap="round" stroke-linejoin="round" />
<path d="M1391.90 308.2 Q1392.35 305.59999999999997 1394.90 305.59999999999997 Q1397.45 305.59999999999997 1397.90 308.2" fill="none" stroke="#111" stroke-width="1.3" stroke-linecap="round" stroke-linejoin="round" />
<path d="M1388.60 308.2 V321.40 Q1388.60 323.0 1390.20 323.0 H1399.60 Q1401.20 323.0 1401.20 321.40 V308.2" fill="none" stroke="#111" stroke-width="1.3" stroke-linecap="round" stroke-linejoin="round" />
<path d="M1391.90 310.8 V320.20" fill="none" stroke="#111" stroke-width="1.1700000000000002" stroke-linecap="round" stroke-linejoin="round" />
<path d="M1394.90 310.8 V320.20" fill="none" stroke="#111" stroke-width="1.1700000000000002" stroke-linecap="round" stroke-linejoin="round" />
<path d="M1397.90 310.8 V320.20" fill="none" stroke="#111" stroke-width="1.1700000000000002" stroke-linecap="round" stroke-linejoin="round" />
<rect x="1387.6" y="333.7" width="14.9" height="14.6" rx="1.8" fill="none" stroke="#111" stroke-width="1.3"/>
<circle cx="1394.9" cy="337.1" r="1.1" fill="#111"/>
<path d="M1393.5 339.8 H1394.9 V345.6 M1393.3 345.8 H1396.6" fill="none" stroke="#111" stroke-width="1.4" stroke-linecap="round" stroke-linejoin="round" />
<path d="M1669.78 227.11 H1663.71 Q1662.14 227.11 1662.14 228.68 V240.18 Q1662.14 241.74 1663.71 241.74 H1675.30 Q1676.86 241.74 1676.86 240.18 V233.74" fill="none" stroke="#111" stroke-width="1.3" stroke-linecap="round" stroke-linejoin="round" />
<path d="M1666.56 237.23 L1677.69 226.38" fill="none" stroke="#111" stroke-width="1.3" stroke-linecap="round" stroke-linejoin="round" />
<path d="M1674.75 225.27 H1679.35 V229.69 Z" fill="#111" stroke="#111" stroke-width="1.3" stroke-linecap="round" stroke-linejoin="round" />
<path d="M1669.78 254.11 H1663.71 Q1662.14 254.11 1662.14 255.68 V267.18 Q1662.14 268.74 1663.71 268.74 H1675.30 Q1676.86 268.74 1676.86 267.18 V260.74" fill="none" stroke="#111" stroke-width="1.3" stroke-linecap="round" stroke-linejoin="round" />
<path d="M1666.56 264.23 L1677.69 253.38" fill="none" stroke="#111" stroke-width="1.3" stroke-linecap="round" stroke-linejoin="round" />
<path d="M1674.75 252.27 H1679.35 V256.69 Z" fill="#111" stroke="#111" stroke-width="1.3" stroke-linecap="round" stroke-linejoin="round" />
<path d="M1669.78 281.11 H1663.71 Q1662.14 281.11 1662.14 282.68 V294.18 Q1662.14 295.74 1663.71 295.74 H1675.30 Q1676.86 295.74 1676.86 294.18 V287.74" fill="none" stroke="#111" stroke-width="1.3" stroke-linecap="round" stroke-linejoin="round" />
<path d="M1666.56 291.23 L1677.69 280.38" fill="none" stroke="#111" stroke-width="1.3" stroke-linecap="round" stroke-linejoin="round" />
<path d="M1674.75 279.27 H1679.35 V283.69 Z" fill="#111" stroke="#111" stroke-width="1.3" stroke-linecap="round" stroke-linejoin="round" />
<path d="M754.6 841.3 L764.8000000000001 851.3 M764.8000000000001 841.3 L754.6 851.3" stroke="#111" stroke-width="1.7" fill="none"/>
<path d="M1068.8 841.3 L1079.0 851.3 M1079.0 841.3 L1068.8 851.3" stroke="#111" stroke-width="1.7" fill="none"/>
<path d="M1344.0 841.3 L1354.2 851.3 M1354.2 841.3 L1344.0 851.3" stroke="#111" stroke-width="1.7" fill="none"/>
<path d="M1618.8 841.3 L1629.0 851.3 M1629.0 841.3 L1618.8 851.3" stroke="#111" stroke-width="1.7" fill="none"/>
<path d="M791.6 845.4 A7.3 7.3 0 0 1 805.8 842.6" fill="none" stroke="#c9692f" stroke-width="1.1" stroke-linecap="round" stroke-linejoin="round" />
<path d="M806.6 838.4 V843.5 H801.6" fill="none" stroke="#c9692f" stroke-width="1.3" stroke-linecap="round" stroke-linejoin="round" />
<path d="M806.2 846.4 A7.3 7.3 0 0 1 792 849" fill="none" stroke="#c9692f" stroke-width="1.1" stroke-linecap="round" stroke-linejoin="round" />
<path d="M791.3 853.6 V848.2 H796.6" fill="none" stroke="#c9692f" stroke-width="1.3" stroke-linecap="round" stroke-linejoin="round" />
<circle cx="835.9" cy="841.9" r="3.6" fill="none" stroke="#ffffff" stroke-width="1.1"/>
<path d="M830.4 853.6 H841.6 Q842.9 853.6 842.8 852 Q842.5 847.4 838.8 847.4 Q835.9 848.3 833 847.4 Q829.3 847.4 829.1 852 Q829 853.6 830.4 853.6 Z" fill="none" stroke="#ffffff" stroke-width="1.1" stroke-linecap="round" stroke-linejoin="round" />
<path d="M842.4 845.6 H848.8 M845.6 842.4 V848.8" fill="none" stroke="#ffffff" stroke-width="1.1" stroke-linecap="round" stroke-linejoin="round" />
<path d="M1107 846 H1119 M1113 840 V852" stroke="#fff" stroke-width="1.7" fill="none"/>
<path d="M1382 846 H1394 M1388 840 V852" stroke="#fff" stroke-width="1.7" fill="none"/>
<path d="M1657 846 H1669 M1663 840 V852" stroke="#fff" stroke-width="1.7" fill="none"/>
<path d="M862.8 506.6 L868 512.6 L862.8 518.6 Z" fill="none" stroke="#ffffff" stroke-width="1.6" stroke-linecap="round" stroke-linejoin="round" />
<path d="M1138.8 506.6 L1144 512.6 L1138.8 518.6 Z" fill="none" stroke="#ffffff" stroke-width="1.6" stroke-linecap="round" stroke-linejoin="round" />
<path d="M1413.8 506.6 L1419 512.6 L1413.8 518.6 Z" fill="none" stroke="#ffffff" stroke-width="1.6" stroke-linecap="round" stroke-linejoin="round" />
<path d="M1665.3 876.6 V887 L1668 884.3 L1670 887 H1672.5 L1670.2 883.4 H1674 Z" fill="#111" stroke="#fff" stroke-width="1"/>
<path d="M1690.5 887 Q1691.5 882.5 1695 881 V887 Z" fill="#2a3f5a" />
</svg>
</body></html>
